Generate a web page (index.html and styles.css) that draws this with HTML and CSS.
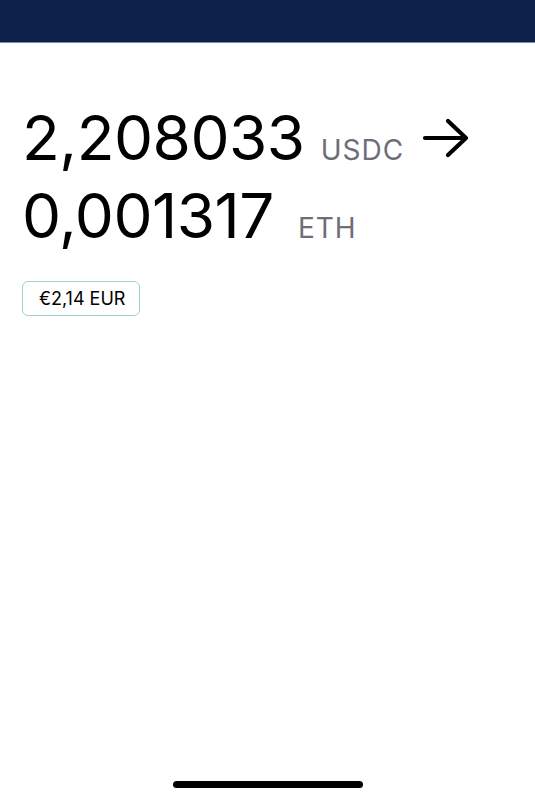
FILE: index.html
```html
<!DOCTYPE html>
<html>
<head>
  <title>Swap</title>
  <link rel="stylesheet" href="styles.css">
</head>
<body>
  <div class="screen">
    <div class="top-bar"></div>
    <div class="content">
      <div class="amount-row">
        <span class="amount">2,208033</span>
        <span class="unit">USDC</span>
        <svg class="arrow" width="48" height="40" viewBox="0 0 48 40">
          <path d="M3 20 H44 M26 3 L44 20 L26 37" fill="none" stroke="#000" stroke-width="4.2" stroke-linecap="round" stroke-linejoin="round"/>
        </svg>
      </div>
      <div class="amount-row">
        <span class="amount">0,001317</span>
        <span class="unit unit-wide">ETH</span>
      </div>
      <div class="fiat">€2,14 EUR</div>
    </div>
    <div class="home-bar"></div>
  </div>
</body>
</html>
```

FILE: styles.css
```css
body {
  margin: 0;
  background-color: #fff;
  font-family: Inter, "Noto Sans", sans-serif;
}
.screen {
  height: 800px;
  display: flex;
  flex-direction: column;
}
.top-bar {
  height: 42px;
  background-color: #0c2049;
  border-bottom: 1px solid #7d8ba3;
}
.content {
  flex: 1;
  padding: 56px 0 0 22px;
  display: flex;
  flex-direction: column;
  align-items: flex-start;
}
.amount-row {
  display: flex;
  align-items: baseline;
  height: 78px;
}
.amount {
  font-size: 62px;
  line-height: 78px;
  color: #000;
  letter-spacing: -0.5px;
}
.unit {
  font-size: 28px;
  color: #6d6e78;
  margin-left: 16px;
  letter-spacing: 1px;
}
.unit-wide {
  margin-left: 24px;
}
.arrow {
  margin-left: 18px;
  align-self: center;
}
.fiat {
  margin-top: 26px;
  border: 1px solid #9fd2c6;
  border-radius: 6px;
  padding: 6px 14px 6px 16px;
  font-size: 18px;
  color: #000;
}
.home-bar {
  width: 190px;
  height: 7px;
  border-radius: 4px;
  background-color: #000;
  margin: 0 auto 12px;
}
```
